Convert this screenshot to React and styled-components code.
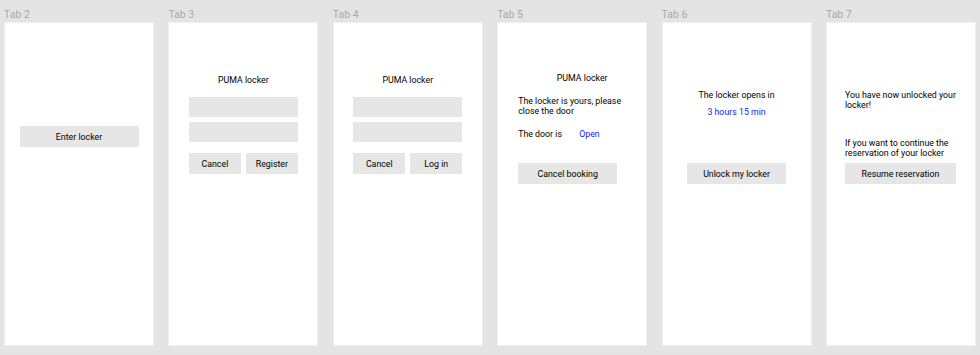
import styled, { createGlobalStyle } from "styled-components";

const GlobalStyle = createGlobalStyle`
  html, body {
    margin: 0;
    padding: 0;
    background: #e4e4e4;
    font-family: Roboto, "Liberation Sans", Arial, sans-serif;
  }
`;

const Board = styled.div`
  width: 980px;
  height: 355px;
  box-sizing: border-box;
  padding: 0 4px;
  display: flex;
  gap: 14.4px;
  background: #e4e4e4;
`;

const Column = styled.div`
  width: 150px;
  display: flex;
  flex-direction: column;
`;

const TabLabel = styled.div`
  height: 16px;
  padding-top: 6px;
  display: flex;
  align-items: center;
  font-size: 10.5px;
  color: #a8a8a8;
`;

const Frame = styled.div`
  height: 324px;
  box-sizing: border-box;
  background: #fff;
  border: 1px solid #efefef;
  display: flex;
  flex-direction: column;
  align-items: ${(p) => (p.$left ? "flex-start" : "center")};
  padding-top: ${(p) => p.$top}px;
  padding-left: ${(p) => p.$left || 0}px;
  color: #000;
  font-size: 8.8px;
  line-height: 10.5px;
`;

const Title = styled.div`
  line-height: 12px;
  margin-bottom: ${(p) => p.$mb}px;
  align-self: center;
`;

const Field = styled.div`
  width: 109px;
  height: 20px;
  background: #e6e6e6;
  margin-bottom: ${(p) => p.$mb}px;
`;

const ButtonRow = styled.div`
  display: flex;
  gap: 5px;
`;

const Button = styled.button`
  width: ${(p) => p.$w}px;
  height: 21px;
  border: none;
  padding: 0;
  background: #e6e6e6;
  font-family: inherit;
  font-size: 8.8px;
  color: #000;
  margin-top: ${(p) => p.$mt || 0}px;
`;

const Text = styled.div`
  width: 114px;
  margin-bottom: ${(p) => p.$mb || 0}px;
  text-align: ${(p) => (p.$center ? "center" : "left")};
`;

const DoorRow = styled.div`
  display: flex;
  width: 112px;
  margin-bottom: ${(p) => p.$mb}px;
`;

const DoorLabel = styled.span`
  width: 61px;
`;

const Blue = styled.span`
  color: #1c22e4;
`;

function LoginFrame({ action }) {
  return (
    <Frame $top={51}>
      <Title $mb={11}>PUMA locker</Title>
      <Field $mb={5} />
      <Field $mb={11} />
      <ButtonRow>
        <Button $w={52}>Cancel</Button>
        <Button $w={52}>{action}</Button>
      </ButtonRow>
    </Frame>
  );
}

export default function App() {
  return (
    <>
      <GlobalStyle />
      <Board>
        <Column>
          <TabLabel>Tab 2</TabLabel>
          <Frame $top={103}>
            <Button $w={119}>Enter locker</Button>
          </Frame>
        </Column>
        <Column>
          <TabLabel>Tab 3</TabLabel>
          <LoginFrame action="Register" />
        </Column>
        <Column>
          <TabLabel>Tab 4</TabLabel>
          <LoginFrame action="Log in" />
        </Column>
        <Column>
          <TabLabel>Tab 5</TabLabel>
          <Frame $top={49} $left={20}>
            <Title $mb={11.75}>PUMA locker</Title>
            <Text $mb={12}>The locker is yours, please close the door</Text>
            <DoorRow $mb={23.75}>
              <DoorLabel>The door is</DoorLabel>
              <Blue>Open</Blue>
            </DoorRow>
            <Button $w={99}>Cancel booking</Button>
          </Frame>
        </Column>
        <Column>
          <TabLabel>Tab 6</TabLabel>
          <Frame $top={66.5}>
            <Text $center $mb={6.5}>The locker opens in</Text>
            <Text $center>
              <Blue>3 hours 15 min</Blue>
            </Text>
            <Button $w={99} $mt={46}>Unlock my locker</Button>
          </Frame>
        </Column>
        <Column>
          <TabLabel>Tab 7</TabLabel>
          <Frame $top={66.5} $left={18}>
            <Text $mb={27.25}>You have now unlocked your locker!</Text>
            <Text>If you want to continue the reservation of your locker</Text>
            <Button $w={111} $mt={4.25}>Resume reservation</Button>
          </Frame>
        </Column>
      </Board>
    </>
  );
}
